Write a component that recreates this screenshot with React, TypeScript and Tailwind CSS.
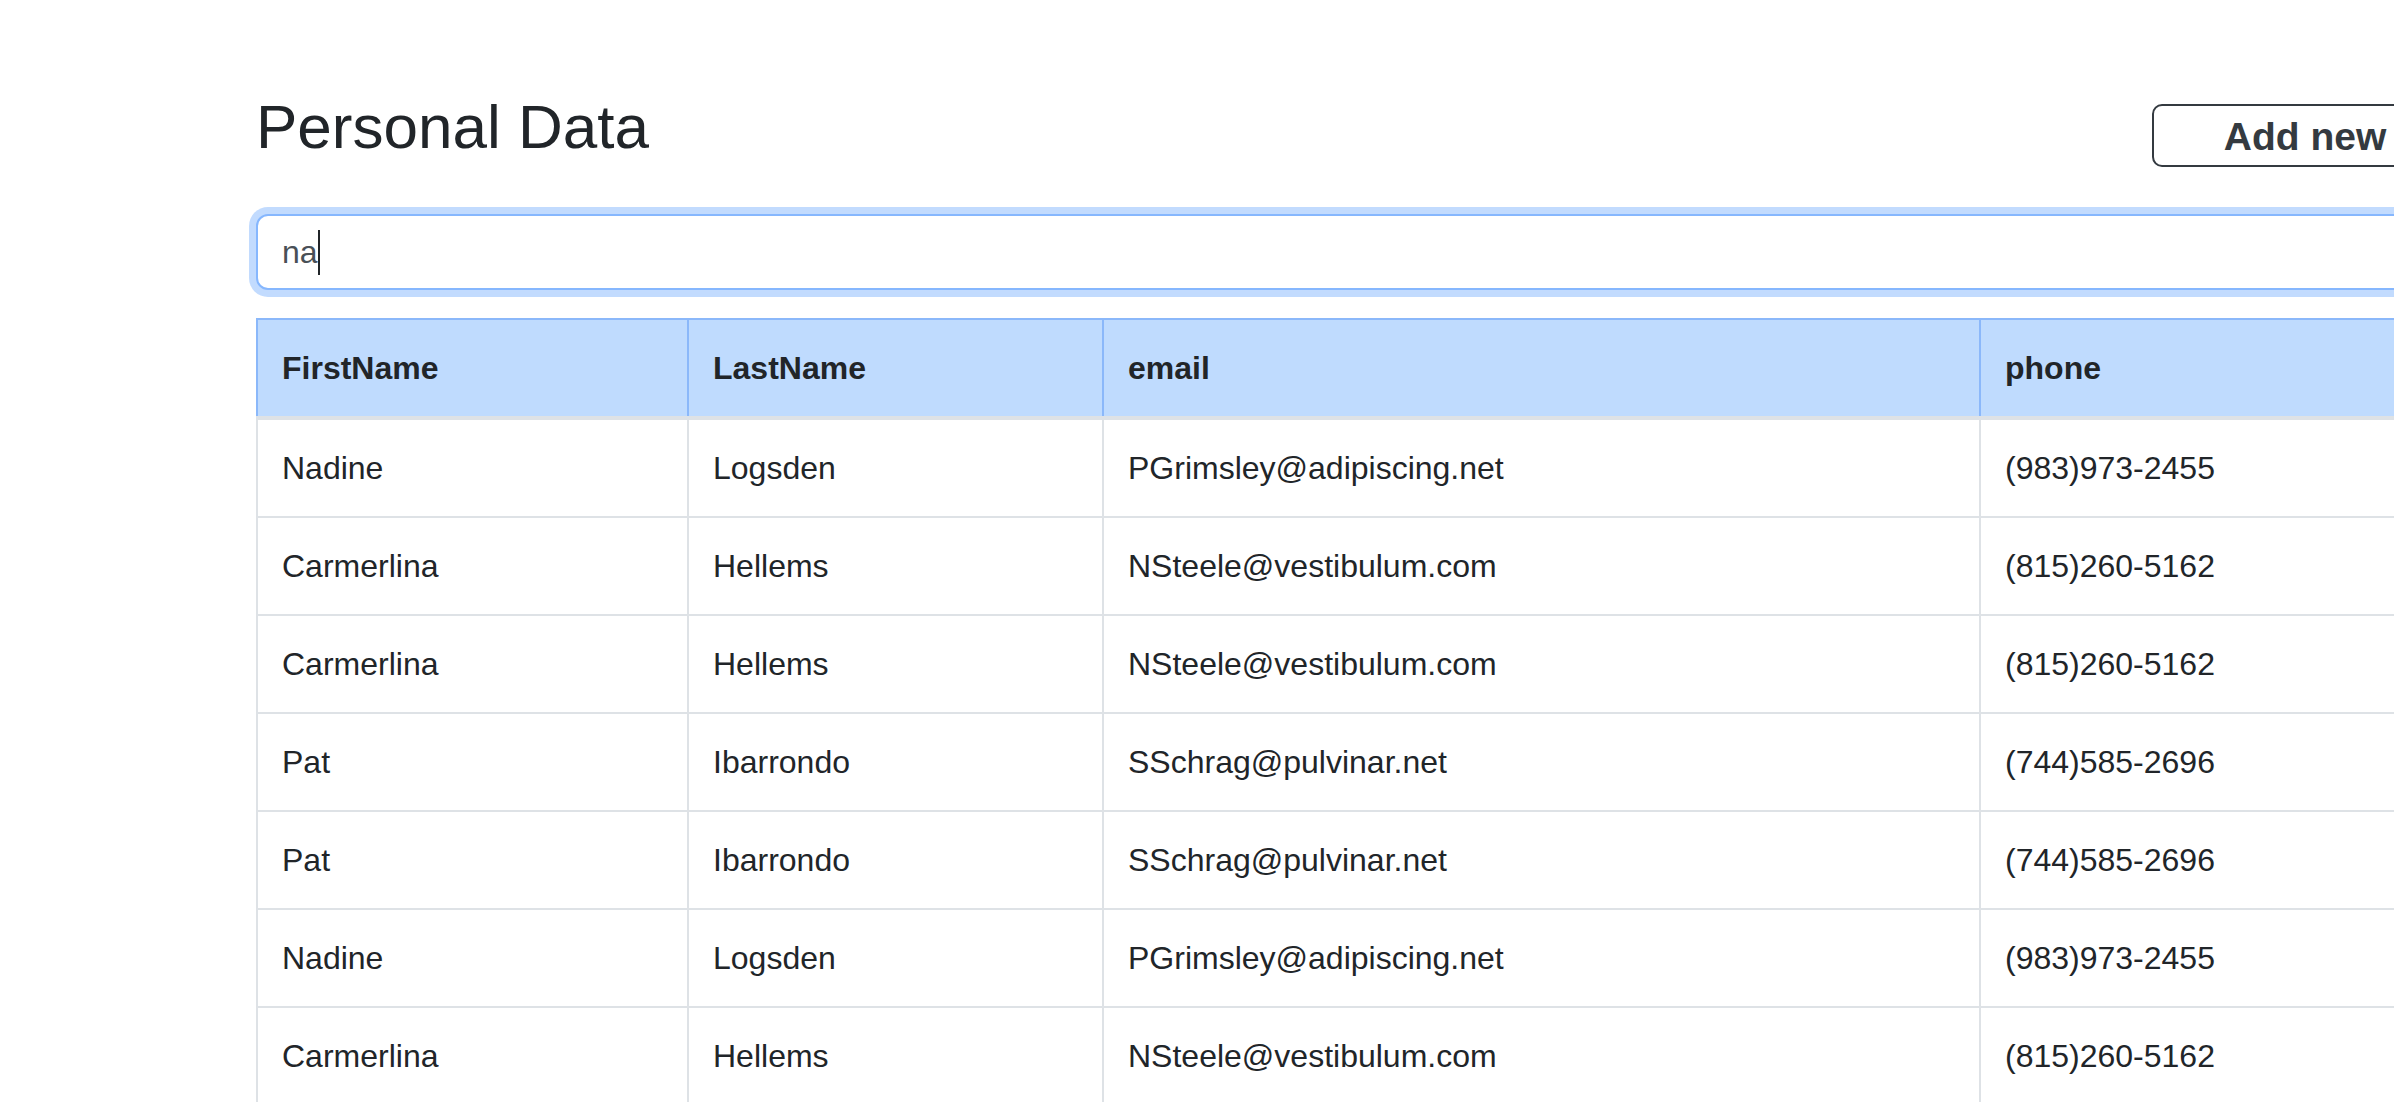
import React from "react";

type Person = { first: string; last: string; email: string; phone: string };

const rows: Person[] = [
  { first: "Nadine", last: "Logsden", email: "PGrimsley@adipiscing.net", phone: "(983)973-2455" },
  { first: "Carmerlina", last: "Hellems", email: "NSteele@vestibulum.com", phone: "(815)260-5162" },
  { first: "Carmerlina", last: "Hellems", email: "NSteele@vestibulum.com", phone: "(815)260-5162" },
  { first: "Pat", last: "Ibarrondo", email: "SSchrag@pulvinar.net", phone: "(744)585-2696" },
  { first: "Pat", last: "Ibarrondo", email: "SSchrag@pulvinar.net", phone: "(744)585-2696" },
  { first: "Nadine", last: "Logsden", email: "PGrimsley@adipiscing.net", phone: "(983)973-2455" },
  { first: "Carmerlina", last: "Hellems", email: "NSteele@vestibulum.com", phone: "(815)260-5162" },
];

export default function App() {
  return (
    <div className="w-[2394px] h-[1102px] overflow-hidden bg-white font-['Liberation_Sans',Arial,sans-serif] text-[#212529]">
      <div className="w-[2202px] ml-[256px] pt-[90px]">
        <div className="flex justify-between items-start">
          <h2 className="text-[62px] leading-[1.2] font-normal m-0">Personal Data</h2>
          <button
            type="button"
            className="mt-[14px] h-[63px] w-[306px] flex items-center justify-center pt-[2px] border-2 border-[#343a40] rounded-[10px] bg-white text-[39px] leading-none font-bold text-[#343a40]"
          >
            Add new
          </button>
        </div>

        <div className="mt-[47px] h-[76px] border-2 border-[#86b7fe] rounded-[12px] bg-white shadow-[0_0_0_7px_rgba(13,110,253,0.25)] pl-[24px] flex items-center">
          <span className="text-[32px] leading-[48px] text-[#495057]">na</span>
          <span className="w-[2px] h-[45px] bg-[#212529] ml-[0px]" />
        </div>

        <table className="mt-[28px] w-[2202px] table-fixed border-separate border-spacing-0 text-[32px] leading-[48px]">
          <thead>
            <tr className="bg-[#bfdbfe]">
              <th className="w-[433px] text-left font-bold px-[24px] py-[24px] border-t-2 border-l-2 border-r-2 border-[#8bb8fa]">FirstName</th>
              <th className="w-[415px] text-left font-bold px-[24px] py-[24px] border-t-2 border-r-2 border-[#8bb8fa]">LastName</th>
              <th className="w-[877px] text-left font-bold px-[24px] py-[24px] border-t-2 border-r-2 border-[#8bb8fa]">email</th>
              <th className="w-[477px] text-left font-bold px-[24px] py-[24px] border-t-2 border-r-2 border-[#8bb8fa]">phone</th>
            </tr>
          </thead>
          <tbody>
            {rows.map((r, i) => {
              const top = i === 0 ? "border-t-4" : "";
              return (
                <tr key={i}>
                  <td className={`px-[24px] py-[24px] border-l-2 border-r-2 border-b-2 border-[#dee2e6] ${top}`}>{r.first}</td>
                  <td className={`px-[24px] py-[24px] border-r-2 border-b-2 border-[#dee2e6] ${top}`}>{r.last}</td>
                  <td className={`px-[24px] py-[24px] border-r-2 border-b-2 border-[#dee2e6] ${top}`}>{r.email}</td>
                  <td className={`px-[24px] py-[24px] border-r-2 border-b-2 border-[#dee2e6] ${top}`}>{r.phone}</td>
                </tr>
              );
            })}
          </tbody>
        </table>
      </div>
    </div>
  );
}
